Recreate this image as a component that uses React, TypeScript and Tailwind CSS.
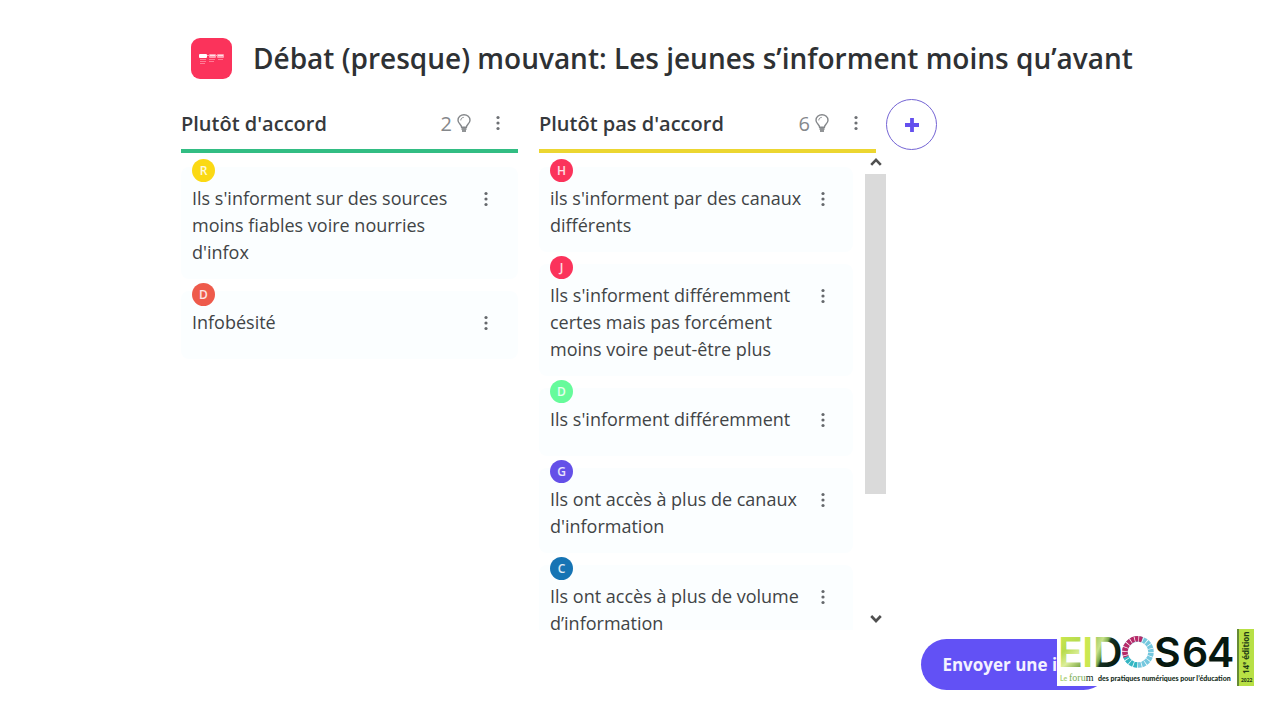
type Idea = {
  initial: string;
  color: string;
  text: string;
};

const agree: Idea[] = [
  { initial: 'R', color: 'bg-[#fbd914]', text: "Ils s'informent sur des sources moins fiables voire nourries d'infox" },
  { initial: 'D', color: 'bg-[#ee5a4b]', text: 'Infobésité' },
];

const disagree: Idea[] = [
  { initial: 'H', color: 'bg-[#fb335b]', text: "ils s'informent par des canaux différents" },
  { initial: 'J', color: 'bg-[#fb335b]', text: "Ils s'informent différemment certes mais pas forcément moins voire peut-être plus" },
  { initial: 'D', color: 'bg-[#66fb9b]', text: "Ils s'informent différemment" },
  { initial: 'G', color: 'bg-[#6450e8]', text: "Ils ont accès à plus de canaux d'information" },
  { initial: 'C', color: 'bg-[#1674b4]', text: 'Ils ont accès à plus de volume d’information' },
];

function Dots() {
  return (
    <svg width="4" height="16" viewBox="0 0 4 16" fill="currentColor" aria-hidden="true">
      <circle cx="2" cy="2.5" r="1.6" />
      <circle cx="2" cy="8" r="1.6" />
      <circle cx="2" cy="13.5" r="1.6" />
    </svg>
  );
}

function Bulb() {
  return (
    <svg width="14" height="18" viewBox="0 0 14 18" fill="none" stroke="currentColor" strokeWidth="1.4" aria-hidden="true">
      <path d="M4.6 13.2C4.6 10.8 1 9.6 1 6.2a6 5.5 0 0 1 12 0c0 3.4-3.6 4.6-3.6 7z" />
      <path d="M3.8 6.4c0-1.8 1.2-2.9 2.9-3" strokeWidth="1" />
      <path d="M4.5 15h5" strokeWidth="1.8" />
      <path d="M5 17h4" strokeWidth="1.8" />
    </svg>
  );
}

function ColumnHeader({ title, count, border }: { title: string; count: number; border: string }) {
  return (
    <div className={`flex h-[54px] items-center border-b-4 pb-[2px] ${border}`}>
      <h2 className="flex-1 text-[20px] leading-[27px] font-semibold text-[#36393c]">{title}</h2>
      <span className="flex items-center gap-[5px] text-[20px] leading-[27px] text-[#85888b]">
        {count}
        <Bulb />
      </span>
      <button type="button" aria-label="Options de la colonne" className="ml-[7px] flex h-7 w-10 items-center justify-center text-[#6d7074]">
        <Dots />
      </button>
    </div>
  );
}

function Card({ idea, narrow }: { idea: Idea; narrow?: boolean }) {
  return (
    <li className="relative flex min-h-[68px] shrink-0 rounded-lg bg-[#fbfeff] pt-[18px] pb-[13px] pl-[11px]">
      <span className={`absolute -top-2 left-[11px] flex size-[23px] items-center justify-center rounded-full text-[12px] font-semibold text-white/85 ${idea.color}`}>
        {idea.initial}
      </span>
      <p className="flex-1 text-[18px] leading-[27px] text-[#414446]">{idea.text}</p>
      <button
        type="button"
        aria-label="Options de l'idée"
        className={`flex h-7 w-9 shrink-0 items-center justify-center text-[#65686c] ${narrow ? 'mr-3' : 'mr-[14px]'}`}
      >
        <Dots />
      </button>
    </li>
  );
}

function Logo() {
  return (
    <svg width="197" height="57" viewBox="0 0 197 57" role="img" aria-label="EIDOS64, 14e édition">
      <defs>
        <linearGradient id="leaf" x1="0" y1="0" x2="0.4" y2="1">
          <stop offset="0" stopColor="#d5ef4c" />
          <stop offset="0.5" stopColor="#b7dc4f" />
          <stop offset="0.75" stopColor="#dcee9b" />
          <stop offset="1" stopColor="#7ba746" />
        </linearGradient>
        <linearGradient id="shade" x1="0" y1="0.1" x2="0.8" y2="0.7">
          <stop offset="0" stopColor="#8fc04d" />
          <stop offset="0.35" stopColor="#c7e28a" />
          <stop offset="0.5" stopColor="#7dab4c" />
          <stop offset="0.58" stopColor="#173021" />
          <stop offset="1" stopColor="#061a12" />
        </linearGradient>
      </defs>
      <path d="M0 5h180V0h17v57H0z" fill="#fff" />
      <g fontFamily="Inter, sans-serif" fontSize="41" fontWeight="600">
        <text x="1" y="38" fill="url(#leaf)">E</text>
        <text x="25" y="38" fill="#cce851">I</text>
        <text x="36" y="38" fill="url(#shade)">D</text>
        <text x="97" y="38" fill="#07180f">S</text>
        <text x="125" y="38" fill="#07180f">6</text>
        <text x="150" y="38" fill="#07180f">4</text>
      </g>
      <g fill="none" strokeWidth="5.5">
        <circle cx="81" cy="23" r="13" stroke="#74c7de" />
        <path d="M69 28a13 13 0 0 1 16-17.4" stroke="#b72968" />
        <path d="M69 28a13 13 0 0 0 12 8" stroke="#33b6c2" />
      </g>
      <circle cx="81" cy="23" r="13" fill="none" stroke="#fff" strokeWidth="6" strokeDasharray="0.7 3.384" />
      <g fontSize="7">
        <text x="3" y="52" fill="#a9cf75" fontFamily="Lato, sans-serif" fontWeight="700">Le</text>
        <text x="12" y="52" fill="#78ad55" fontFamily="Liberation Serif, serif" fontSize="10">
          foru<tspan fill="#142d20">m</tspan>
        </text>
        <text x="41" y="52" fill="#142d20" fontFamily="Lato, sans-serif" fontWeight="900">des pratiques numériques pour l’éducation</text>
      </g>
      <path d="M180 0h17v57h-17z" fill="#b8e045" />
      <path d="M180 0h2v57h-2z" fill="#668b34" />
      <g fontFamily="Open Sans, sans-serif" fontWeight="700" fill="#233c16">
        <text transform="translate(192 45) rotate(-90)" fontSize="8">
          14<tspan dy="-3" fontSize="5">e</tspan><tspan dy="3"> édition</tspan>
        </text>
        <text x="184" y="53" fontSize="5">2022</text>
      </g>
    </svg>
  );
}

export default function App() {
  return (
    <div className="relative flex h-screen flex-col overflow-hidden bg-white font-['Open_Sans',sans-serif]">
      <header className="flex items-center gap-[21px] pt-[38px] pl-[191px]">
        <svg width="41" height="41" viewBox="0 0 41 41" className="shrink-0" aria-hidden="true">
          <rect width="41" height="41" rx="9" fill="#fb335b" />
          <rect x="8" y="16" width="8" height="4" rx="1" fill="#fff" />
          <g fill="#ff9caf">
            <path d="M16 17h10v1H16z" />
            <rect x="18" y="16" width="7" height="4" rx="1" />
            <rect x="26" y="16" width="7" height="4" rx="1" />
          </g>
          <path d="M19 17.5h5M27 17.5h5" stroke="#ffe0e6" />
          <g fill="#ff7b95">
            <path d="M9 21h6v1H9zM9 23h6v1H9zM9 25h5v1H9zM18 21h6v1h-6zM18 23h5v1h-5zM27 21h5v1h-5z" />
          </g>
        </svg>
        <h1 className="text-[28px] leading-[41px] font-semibold text-[#2e3134]">
          Débat (presque) mouvant: Les jeunes s’informent moins qu’avant
        </h1>
      </header>

      <main className="flex items-start pt-5 pl-[181px]">
        <section className="w-[337px]">
          <ColumnHeader title="Plutôt d'accord" count={2} border="border-[#32bd83]" />
          <ul className="flex flex-col gap-3 pt-[14px]">
            {agree.map((idea) => (
              <Card key={idea.text} idea={idea} />
            ))}
          </ul>
        </section>

        <section className="ml-[21px] w-[337px]">
          <ColumnHeader title="Plutôt pas d'accord" count={6} border="border-[#ecd631]" />
          <div className="-mr-[10px] flex h-[477px]">
            <ul className="flex flex-1 flex-col gap-3 overflow-hidden pt-[14px]">
              {disagree.map((idea) => (
                <Card key={idea.text} idea={idea} narrow />
              ))}
            </ul>
            <div className="ml-3 flex w-[21px] flex-col items-center text-[#505050]">
              <svg width="12" height="21" viewBox="0 0 12 21" fill="none" stroke="currentColor" strokeWidth="2.6" aria-hidden="true">
                <path d="m1.2 11.8 4.8-5 4.8 5" />
              </svg>
              <div className="h-80 w-full bg-[#dadada]" />
              <svg width="12" height="22" viewBox="0 0 12 22" fill="none" stroke="currentColor" strokeWidth="2.6" className="mt-auto" aria-hidden="true">
                <path d="m1.2 8 4.8 5 4.8-5" />
              </svg>
            </div>
          </div>
        </section>

        <button
          type="button"
          aria-label="Ajouter une colonne"
          className="ml-[10px] flex size-[51px] items-center justify-center rounded-full border border-[#7464d4] text-[#6450ee]"
        >
          <svg width="14" height="14" viewBox="0 0 14 14" stroke="currentColor" strokeWidth="3.8" aria-hidden="true">
            <path d="M7 0v14M0 7h14" />
          </svg>
        </button>
      </main>

      <button
        type="button"
        className="absolute right-[171px] bottom-[30px] h-[51px] rounded-full bg-[#6251f5] px-[21px] text-[17px] font-bold whitespace-nowrap text-[#f4f2ff]"
      >
        Envoyer une idée
      </button>
      <div className="absolute right-[26px] bottom-[34px]">
        <Logo />
      </div>
    </div>
  );
}
